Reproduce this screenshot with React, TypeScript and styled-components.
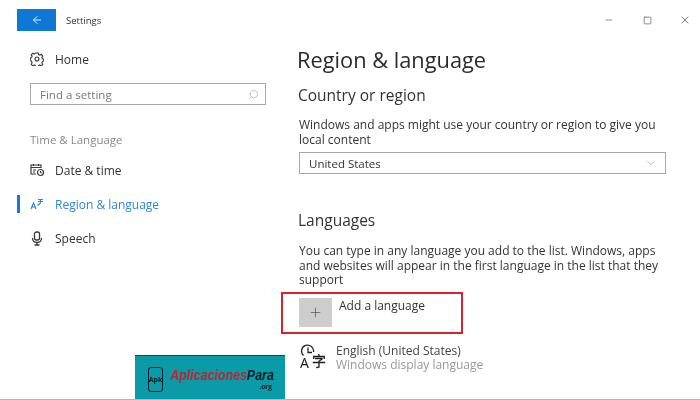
import styled, { createGlobalStyle } from 'styled-components';
import { ArrowLeft, Minus, Square, X, Search, ChevronDown, Plus } from 'lucide-react';

const GlobalStyle = createGlobalStyle`
  html, body { margin: 0; padding: 0; background: #fff; }
  body { font-family: "Open Sans", "Noto Sans", "Liberation Sans", sans-serif; }
`;

const Window = styled.div`
  position: relative;
  width: 700px;
  height: 400px;
  overflow: hidden;
  background: #fff;
  filter: blur(0.35px);
  box-sizing: border-box;
  border-bottom: 1px solid #8cc4dc;
`;

const TitleBar = styled.div`
  display: flex;
  align-items: center;
  height: 22px;
  padding: 9px 0 0 17px;
`;

const BackButton = styled.div`
  display: flex;
  align-items: center;
  justify-content: center;
  width: 39px;
  height: 22px;
  background: #0f78d4;
  color: #dfeefa;
`;

const AppName = styled.span`
  margin-left: 10px;
  font-size: 9.5px;
  color: #333;
`;

const WindowControls = styled.div`
  display: flex;
  align-items: center;
  margin-left: auto;
  padding-right: 9px;
  gap: 26px;
  color: #444;
`;

const ControlSlot = styled.span`
  display: flex;
  justify-content: center;
  width: 12px;
`;

const Body = styled.div`
  display: flex;
`;

const Sidebar = styled.nav`
  box-sizing: border-box;
  width: 281px;
  padding: 19px 16px 0 17px;
`;

const NavItem = styled.div<{ $active?: boolean }>`
  display: flex;
  align-items: center;
  height: 18px;
  margin-bottom: 16px;
  border-left: 3px solid ${({ $active }) => ($active ? '#1a78d0' : 'transparent')};
  padding-left: 9px;
  font-size: 12px;
  color: ${({ $active }) => ($active ? '#2d87d8' : '#333')};
`;

const NavIcon = styled.span<{ $active?: boolean }>`
  display: flex;
  justify-content: center;
  width: 16px;
  margin-right: 10px;
  color: ${({ $active }) => ($active ? '#2d87d8' : '#3a3a3a')};
`;

const SearchBox = styled.div`
  display: flex;
  align-items: center;
  justify-content: space-between;
  box-sizing: border-box;
  width: 236px;
  height: 22px;
  margin: -1px 0 0 13px;
  padding: 0 6px 0 9px;
  border: 1.5px solid #a8a8a8;
  font-size: 11.5px;
  color: #777;
`;

const SectionLabel = styled.div`
  margin: 27px 0 13px 13px;
  font-size: 11.5px;
  line-height: 16px;
  color: #8a8a8a;
`;

const Content = styled.main`
  flex: 1;
  padding: 0 0 0 16px;
`;

const PageTitle = styled.h1`
  margin: 0;
  padding-top: 14px;
  font-size: 21.8px;
  line-height: 30px;
  font-weight: 400;
  color: #2b2b2b;
`;

const SectionTitle = styled.h2<{ $top: number }>`
  margin: ${({ $top }) => $top}px 0 0 1px;
  font-size: 15.5px;
  line-height: 20px;
  font-weight: 400;
  color: #333;
`;

const Description = styled.p<{ $top: number }>`
  margin: ${({ $top }) => $top}px 0 0 2px;
  width: 370px;
  font-size: 12px;
  line-height: 14.5px;
  color: #333;
`;

const Select = styled.div`
  display: flex;
  align-items: center;
  justify-content: space-between;
  box-sizing: border-box;
  width: 367px;
  height: 22px;
  margin: 5px 0 0 2px;
  padding: 0 7px 0 9px;
  border: 1.5px solid #a8a8a8;
  font-size: 11.5px;
  color: #333;
`;

const AddLanguage = styled.div`
  display: flex;
  align-items: flex-start;
  box-sizing: border-box;
  width: 182px;
  height: 42px;
  margin: 4px 0 0 -16px;
  padding: 4px 0 0 16px;
  border: 2px solid #d8232f;
  font-size: 12px;
  line-height: 15px;
  color: #333;
`;

const PlusTile = styled.div`
  display: flex;
  align-items: center;
  justify-content: center;
  width: 33px;
  height: 29px;
  margin-right: 7px;
  background: #cdcdcd;
  color: #444;
`;

const LanguageRow = styled.div`
  display: flex;
  align-items: center;
  margin: 10px 0 0 2px;
`;

const LanguageText = styled.div`
  margin-left: 9px;
  font-size: 12px;
  line-height: 14.5px;
  color: #444;
`;

const LanguageHint = styled.div`
  color: #999;
`;

const Logo = styled.div`
  position: absolute;
  left: 135px;
  bottom: 0;
  display: flex;
  align-items: center;
  box-sizing: border-box;
  width: 150px;
  height: 44px;
  padding: 0 0 0 13px;
  background: #0a9aa8;
  border-top: 1px solid #0b4a55;
`;

const LogoPhone = styled.div`
  display: flex;
  align-items: center;
  justify-content: center;
  box-sizing: border-box;
  width: 15px;
  height: 25px;
  margin-top: 3px;
  border: 1.5px solid #0c1c22;
  border-radius: 3px;
  font-size: 7px;
  font-weight: 700;
  color: #0c1c22;
`;

const LogoWords = styled.div`
  display: flex;
  flex-direction: column;
  align-items: flex-end;
  gap: 1px;
  width: 102px;
  margin: 3px 0 0 7px;
`;

const LogoName = styled.div`
  width: 102px;
  font-family: "Liberation Sans", sans-serif;
  font-size: 14px;
  line-height: 14px;
  font-weight: 700;
  font-style: italic;
  white-space: nowrap;
  color: #c8202e;
  transform: scale(0.89, 1.1);
  transform-origin: left center;
`;

const LogoNameDark = styled.span`
  color: #0c1c22;
`;

const LogoTld = styled.div`
  font-size: 6.5px;
  line-height: 7px;
  font-weight: 700;
  color: #0c1c22;
`;

const GearIcon = () => (
  <svg width="14" height="14" viewBox="0 0 14 14" fill="none" stroke="currentColor" strokeWidth="1.1">
    <circle cx="7" cy="7" r="2" />
    <path d="M5.800 1h2.400l.3 1.600 1.300.6 1.400-.9 1.600 1.800-.9 1.300.5 1.400 1.400.5v1.800l-1.400.5-.5 1.300.9 1.400-1.600 1.600-1.400-.9-1.300.6-.3 1.500H5.800l-.3-1.500-1.300-.6-1.400.9-1.600-1.600.9-1.400-.5-1.300L.2 7.900V6.100l1.400-.5.5-1.400-.9-1.300 1.600-1.800 1.400.9 1.300-.6z" />
  </svg>
);

const CalendarClockIcon = () => (
  <svg width="15" height="14" viewBox="0 0 15 14" fill="none" stroke="currentColor" strokeWidth="1.2">
    <path d="M6 11H1V2h10v3" />
    <path d="M1 4.500h10M3.500 1v2M8.500 1v2" />
    <path d="M3 7h3M3 9h2" strokeWidth="1" />
    <circle cx="10.500" cy="9.500" r="3" />
    <path d="M10.500 8v1.800h1.300" strokeWidth="1" />
  </svg>
);

const RegionIcon = () => (
  <svg width="14" height="12" viewBox="0 0 14 12" fill="none" stroke="currentColor" strokeWidth="1.2">
    <path d="M1 11l2.500-6 2.500 6M2 9h3" />
    <path d="M8 1.500h5M10.500 1v4M8 3.500h5M7.500 7.500l3-2.500" />
  </svg>
);

const MicIcon = () => (
  <svg width="12" height="15" viewBox="0 0 12 15" fill="none" stroke="currentColor" strokeWidth="1.3">
    <rect x="3.500" y="1" width="5" height="8" rx="2" />
    <path d="M1.500 7c0 3 2 4.500 4.500 4.500S10.500 10 10.500 7M6 11.500V14M3.500 14h5" />
  </svg>
);

const LanguageIcon = () => (
  <svg width="28" height="28" viewBox="0 0 28 28" fill="none" stroke="#222" strokeWidth="1.3">
    <path d="M4.500 11.500a6 6 0 1 1 10-3.500" />
    <path d="M9 3.500v5h4" />
    <text x="1" y="24" fontSize="14" fill="#222" stroke="none" fontFamily='"Noto Sans", sans-serif'>A</text>
    <text x="13" y="22" fontSize="14" fill="#222" stroke="#222" strokeWidth="0.3" fontFamily='"Noto Sans CJK SC", sans-serif'>字</text>
  </svg>
);

export default function App() {
  return (
    <>
      <GlobalStyle />
      <Window>
        <TitleBar>
          <BackButton>
            <ArrowLeft size={12} strokeWidth={2} />
          </BackButton>
          <AppName>Settings</AppName>
          <WindowControls>
            <ControlSlot><Minus size={10} strokeWidth={1.4} /></ControlSlot>
            <ControlSlot><Square size={9} strokeWidth={1.6} /></ControlSlot>
            <ControlSlot><X size={12} strokeWidth={1.4} /></ControlSlot>
          </WindowControls>
        </TitleBar>
        <Body>
          <Sidebar>
            <NavItem>
              <NavIcon><GearIcon /></NavIcon>
              Home
            </NavItem>
            <SearchBox>
              Find a setting
              <Search size={11} strokeWidth={1.2} color="#999" style={{ transform: 'scaleX(-1)' }} />
            </SearchBox>
            <SectionLabel>Time &amp; Language</SectionLabel>
            <NavItem>
              <NavIcon><CalendarClockIcon /></NavIcon>
              Date &amp; time
            </NavItem>
            <NavItem $active>
              <NavIcon $active><RegionIcon /></NavIcon>
              Region &amp; language
            </NavItem>
            <NavItem>
              <NavIcon><MicIcon /></NavIcon>
              Speech
            </NavItem>
          </Sidebar>
          <Content>
            <PageTitle>Region &amp; language</PageTitle>
            <SectionTitle $top={10}>Country or region</SectionTitle>
            <Description $top={13}>
              Windows and apps might use your country or region to give you local content
            </Description>
            <Select>
              United States
              <ChevronDown size={14} strokeWidth={1} color="#888" />
            </Select>
            <SectionTitle $top={36}>Languages</SectionTitle>
            <Description $top={14}>
              You can type in any language you add to the list. Windows, apps and websites will appear in the first language in the list that they support
            </Description>
            <AddLanguage>
              <PlusTile><Plus size={15} strokeWidth={1} /></PlusTile>
              Add a language
            </AddLanguage>
            <LanguageRow>
              <LanguageIcon />
              <LanguageText>
                English (United States)
                <LanguageHint>Windows display language</LanguageHint>
              </LanguageText>
            </LanguageRow>
          </Content>
        </Body>
        <Logo>
          <LogoPhone>Apk</LogoPhone>
          <LogoWords>
            <LogoName>Aplicaciones<LogoNameDark>Para</LogoNameDark></LogoName>
            <LogoTld>.org</LogoTld>
          </LogoWords>
        </Logo>
      </Window>
    </>
  );
}
